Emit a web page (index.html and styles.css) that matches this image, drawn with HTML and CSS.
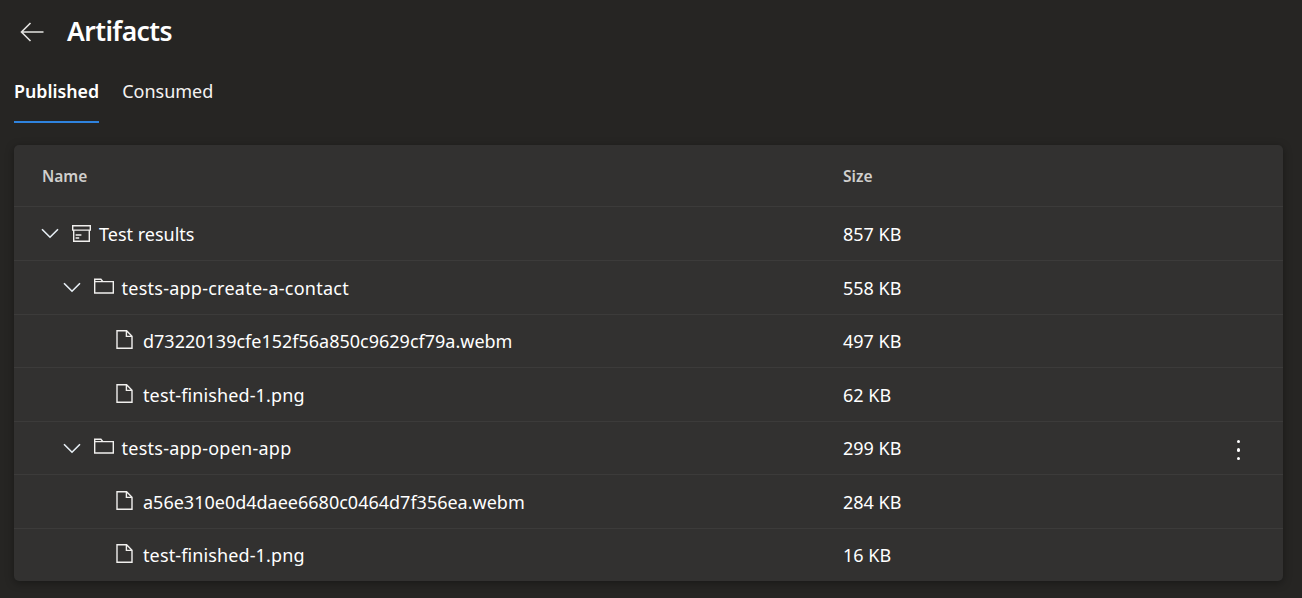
FILE: index.html
```html
<!DOCTYPE html>
<html lang="en">
<head>
<meta charset="utf-8">
<title>Artifacts</title>
<link rel="stylesheet" href="styles.css">
</head>
<body>
<svg class="defs" width="0" height="0" aria-hidden="true">
  <defs>
    <symbol id="chev" viewBox="0 0 18 11"><path d="M1 1.2 9 9.2l8-8" fill="none" stroke="currentColor" stroke-width="1.6"/></symbol>
    <symbol id="folder" viewBox="0 0 20 16"><path d="M.7 15V1.2h6.2l2 2.4h10.4V15z M.7 3.6h8.2" fill="none" stroke="currentColor" stroke-width="1.4"/></symbol>
    <symbol id="file" viewBox="0 0 17 19"><path d="M1 .8h9.6l5.4 5.4v12H1z M10.4 .8v5.6h5.6" fill="none" stroke="currentColor" stroke-width="1.4"/></symbol>
    <symbol id="box" viewBox="0 0 19 17"><path d="M.7.7h17.6v4.4H.7z M1.7 5.1v11.2h15.6V5.1 M3.6 10h5.8 M3.6 13h3.6" fill="none" stroke="currentColor" stroke-width="1.4"/></symbol>
  </defs>
</svg>
<header class="title-bar">
  <svg class="back" viewBox="0 0 24 20" aria-hidden="true"><path d="M23.5 10H1.5M10.5 1 1.5 10l9 9" fill="none" stroke="currentColor" stroke-width="1.6"/></svg>
  <h1 class="title">Artifacts</h1>
</header>
<nav class="tabs">
  <a class="tab tab-active">Published</a>
  <a class="tab">Consumed</a>
</nav>
<main class="card">
  <div class="row head"><div class="name-cell">Name</div><div class="size-cell">Size</div></div>
  <div class="row lvl0"><div class="name-cell"><svg class="chev"><use href="#chev"/></svg><svg class="ico ico-box"><use href="#box"/></svg><span>Test results</span></div><div class="size-cell">857 KB</div></div>
  <div class="row lvl1"><div class="name-cell"><svg class="chev"><use href="#chev"/></svg><svg class="ico ico-folder"><use href="#folder"/></svg><span class="slug">tests-app-create-a-contact</span></div><div class="size-cell">558 KB</div></div>
  <div class="row lvl2"><div class="name-cell"><svg class="ico ico-file"><use href="#file"/></svg><span>d73220139cfe152f56a850c9629cf79a.webm</span></div><div class="size-cell">497 KB</div></div>
  <div class="row lvl2"><div class="name-cell"><svg class="ico ico-file"><use href="#file"/></svg><span class="png">test-finished-1.png</span></div><div class="size-cell">62 KB</div></div>
  <div class="row lvl1"><div class="name-cell"><svg class="chev"><use href="#chev"/></svg><svg class="ico ico-folder"><use href="#folder"/></svg><span class="slug">tests-app-open-app</span></div><div class="size-cell">299 KB</div><div class="more"><i></i><i></i><i></i></div></div>
  <div class="row lvl2"><div class="name-cell"><svg class="ico ico-file"><use href="#file"/></svg><span>a56e310e0d4daee6680c0464d7f356ea.webm</span></div><div class="size-cell">284 KB</div></div>
  <div class="row lvl2"><div class="name-cell"><svg class="ico ico-file"><use href="#file"/></svg><span class="png">test-finished-1.png</span></div><div class="size-cell">16 KB</div></div>
</main>
</body>
</html>
```
FILE: styles.css
```css
html, body { height: 100%; }
body {
  margin: 0;
  background: #262523;
  color: #fff;
  font-family: "Noto Sans", "Open Sans", sans-serif;
  font-size: 18px;
  overflow: hidden;
}
.defs { position: absolute; }
.title-bar {
  display: flex;
  align-items: center;
  height: 62px;
  padding-left: 20px;
}
.back { width: 24px; height: 20px; color: #e4e3e1; margin-right: 23px; margin-top: 2px; }
.title { margin: 0; font-size: 26.5px; font-weight: 600; letter-spacing: -0.55px; }
.tabs { display: flex; gap: 23px; padding: 0 14px; height: 61px; }
.tab { display: flex; align-items: center; height: 61px; box-sizing: border-box; padding-bottom: 3px; color: #f4f3f2; font-size: 18px; }
.tab-active { font-weight: 600; font-size: 17.8px; color: #fff; border-bottom: 2px solid #2f83de; padding-bottom: 2px; }
.card {
  margin: 22px 19px 0 14px;
  background: #323130;
  border-radius: 5px;
  box-shadow: 0 2px 8px rgba(0,0,0,.35);
}
.row {
  position: relative;
  display: grid;
  grid-template-columns: 829px 1fr;
  align-items: center;
  height: 53.6px;
  padding-top: 0.5px;
  box-sizing: border-box;
  border-top: 1px solid #3c3b3a;
}
.row:last-child { height: 53px; }
.head { height: 61.4px; padding-top: 0; border-top: 0; font-size: 15.5px; font-weight: 600; color: #d0cfcd; }
.name-cell { display: flex; align-items: center; white-space: nowrap; }
.head .name-cell { padding-left: 28px; }
.lvl0 .name-cell { padding-left: 27px; }
.lvl1 .name-cell { padding-left: 49px; }
.lvl2 .name-cell { padding-left: 102px; }
.slug { letter-spacing: 0.25px; }
.png { letter-spacing: 0.12px; }
.chev { width: 18px; height: 11px; color: #e8f0f6; margin-right: 13px; }
.ico { color: #f1f0ee; margin-right: 8px; flex: none; }
.ico-box { width: 19px; height: 17px; }
.ico-folder { width: 20px; height: 16px; margin-top: -4px; margin-right: 7.5px; }
.ico-file { width: 17px; height: 19px; margin-right: 10px; margin-top: -3px; }
.more {
  position: absolute;
  right: 43px;
  top: 18px;
  display: flex;
  flex-direction: column;
  gap: 5px;
}
.more i { width: 3.4px; height: 3.4px; background: #fff; border-radius: 50%; }
```
